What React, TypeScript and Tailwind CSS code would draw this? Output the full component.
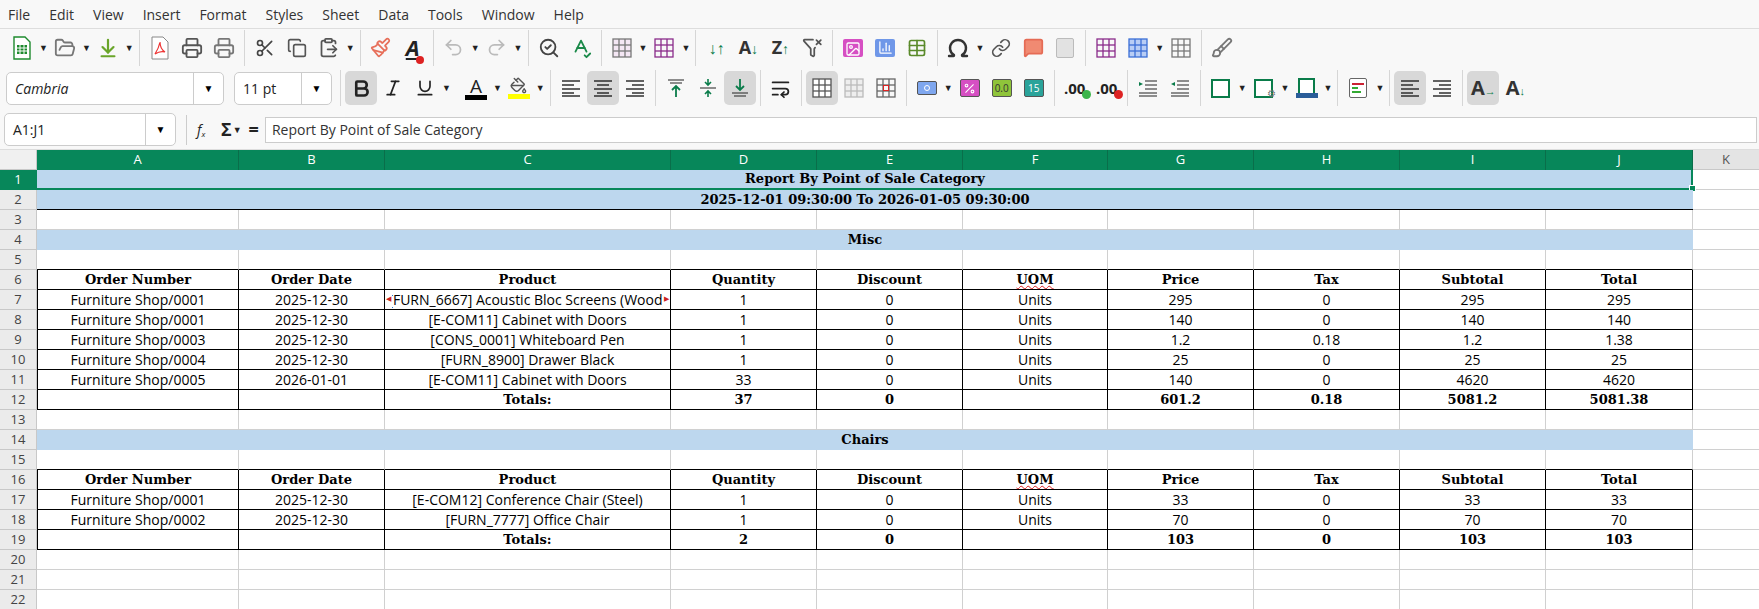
import React from "react";
import {
  FolderOpen, ArrowDownToLine, Printer, Scissors, Copy, ClipboardPaste, Undo2, Redo2,
  SpellCheck, Omega, Link, MessageSquare, Paintbrush, Bold, Italic, Underline,
  PaintBucket, WrapText, Percent, SearchCheck, FilterX, Image, ChartColumn, Table, Brush
} from "lucide-react";

const UI = { fontFamily: '"Open Sans", "Noto Sans", sans-serif' };
const SERIF = { fontFamily: '"DejaVu Serif", "Liberation Serif", serif' };

const Dd = () => <span className="text-[#222] text-[9px] mx-[1px]">▼</span>;
const Sep = () => <div className="w-px h-[36px] bg-[#d6d6d6] mx-[4px]" />;
const Btn = ({ children, active }: { children: React.ReactNode; active?: boolean }) => (
  <div className={`w-[32px] h-[34px] flex items-center justify-center rounded-[5px] ${active ? "bg-[#d8d8d8]" : ""}`}>{children}</div>
);
const Lines = ({ kind }: { kind: "l" | "c" | "r" }) => (
  <svg width="20" height="18" viewBox="0 0 20 18" stroke="#222" strokeWidth="1.4">
    {[2, 6, 10, 14, 17].map((y, i) => {
      const w = i % 2 ? 12 : 18;
      const x = kind === "l" ? 1 : kind === "r" ? 19 - w : (20 - w) / 2;
      return <line key={y} x1={x} x2={x + w} y1={y} y2={y} />;
    })}
  </svg>
);
const Grid = ({ color = "#666", fill = "none", s = 22 }: { color?: string; fill?: string; s?: number }) => (
  <svg width={s} height={s} viewBox="0 0 22 22" stroke={color} strokeWidth="1.3" fill="none">
    <rect x="2" y="2" width="18" height="18" fill={fill} />
    <line x1="2" x2="20" y1="8" y2="8" /><line x1="2" x2="20" y1="14" y2="14" />
    <line x1="8" x2="8" y1="2" y2="20" /><line x1="14" x2="14" y1="2" y2="20" />
  </svg>
);

function Toolbar1() {
  return (
    <div className="h-[37px] flex items-center pl-[6px]">
      <Btn><svg width="20" height="24" viewBox="0 0 20 24"><path d="M2 1h11l5 5v17H2z" fill="#fff" stroke="#1e8a2e" strokeWidth="1.4" /><rect x="5" y="9" width="10" height="9" fill="#1e8a2e" /><path d="M5 12h10M5 15h10M8 9v9M12 9v9" stroke="#fff" /></svg></Btn><Dd />
      <Btn><FolderOpen size={22} color="#777" /></Btn><Dd />
      <Btn><ArrowDownToLine size={22} color="#6aa52a" strokeWidth={2.4} /></Btn><Dd />
      <Sep />
      <Btn><svg width="18" height="24" viewBox="0 0 18 24"><path d="M1 1h11l5 5v17H1z" fill="#fff" stroke="#888" /><path d="M9 6c-1 5-3 9-5 12 3-2 7-3 10-2-3-2-5-6-5-10z" fill="none" stroke="#e33" strokeWidth="1.2" /></svg></Btn>
      <Btn><Printer size={22} color="#555" /></Btn>
      <Btn><Printer size={22} color="#777" /></Btn>
      <Sep />
      <Btn><Scissors size={20} color="#444" /></Btn>
      <Btn><Copy size={20} color="#555" /></Btn>
      <Btn><ClipboardPaste size={21} color="#555" /></Btn><Dd />
      <Sep />
      <Btn><Paintbrush size={21} color="#e76f5a" /></Btn>
      <Btn><span className="text-[22px] font-bold italic underline text-[#222] relative" style={UI}>A<span className="absolute -right-1 bottom-0 w-2 h-2 rounded-full bg-[#d22]" /></span></Btn>
      <Sep />
      <Btn><Undo2 size={21} color="#bbb" /></Btn><Dd />
      <Btn><Redo2 size={21} color="#bbb" /></Btn><Dd />
      <Sep />
      <Btn><SearchCheck size={22} color="#444" /></Btn>
      <Btn><SpellCheck size={22} color="#1b8a4a" /></Btn>
      <Sep />
      <Btn><Grid color="#777" fill="#f4e7f4" /></Btn><Dd />
      <Btn><Grid color="#8a2b8a" /></Btn><Dd />
      <Sep />
      <Btn><span className="text-[#0a7c4a] text-[16px] font-bold">↓↑</span></Btn>
      <Btn><span className="text-[18px] font-bold text-[#333]" style={UI}>A<span className="text-[#0a7c4a] text-[14px]">↓</span></span></Btn>
      <Btn><span className="text-[18px] font-bold text-[#333]" style={UI}>Z<span className="text-[#0a7c4a] text-[14px]">↑</span></span></Btn>
      <Btn><FilterX size={21} color="#555" /></Btn>
      <Sep />
      <Btn><div className="w-[20px] h-[18px] bg-[#d64fc3] rounded-[2px] flex items-end justify-center"><Image size={16} color="#fff" /></div></Btn>
      <Btn><div className="w-[20px] h-[18px] bg-[#6f97e8] rounded-[2px] flex items-center justify-center"><ChartColumn size={15} color="#fff" /></div></Btn>
      <Btn><Table size={20} color="#5a8a2a" /></Btn>
      <Sep />
      <Btn><Omega size={24} color="#333" strokeWidth={2.4} /></Btn><Dd />
      <Btn><Link size={20} color="#555" /></Btn>
      <Btn><MessageSquare size={21} color="#e56b55" fill="#f08a72" /></Btn>
      <Btn><div className="w-[18px] h-[20px] bg-[#e2e2e2] border border-[#bbb] rounded-[2px]" /></Btn>
      <Sep />
      <Btn><Grid color="#8a2b8a" /></Btn>
      <Btn><Grid color="#3b6fd6" fill="#b8cdf5" /></Btn><Dd />
      <Btn><Grid color="#777" /></Btn>
      <Sep />
      <Btn><Brush size={22} color="#777" /></Btn>
    </div>
  );
}

function Toolbar2() {
  const tf = (t: string, bg: string) => (
    <div className={`w-[20px] h-[18px] ${bg} border border-[#555] rounded-[2px] text-[10px] flex items-center justify-center text-white`} style={UI}>{t}</div>
  );
  return (
    <div className="h-[44px] flex items-center pl-[6px]">
      <div className="w-[218px] h-[33px] bg-white border border-[#ccc] rounded-[5px] flex items-center justify-between" style={UI}>
        <span className="italic text-[14px] text-[#222] pl-[8px]">Cambria</span>
        <div className="w-[30px] h-full border-l border-[#ccc] flex items-center justify-center text-[10px]">▼</div>
      </div>
      <div className="ml-[10px] w-[98px] h-[33px] bg-white border border-[#ccc] rounded-[5px] flex items-center justify-between" style={UI}>
        <span className="text-[14px] text-[#222] pl-[8px]">11 pt</span>
        <div className="w-[30px] h-full border-l border-[#ccc] flex items-center justify-center text-[10px]">▼</div>
      </div>
      <div className="w-[4px]" /><Sep />
      <Btn active><Bold size={21} color="#222" strokeWidth={3} /></Btn>
      <Btn><Italic size={20} color="#222" /></Btn>
      <Btn><Underline size={20} color="#222" /></Btn><Dd />
      <div className="w-2" />
      <Btn><div className="flex flex-col items-center"><span className="text-[19px] leading-[18px] text-[#222]" style={UI}>A</span><div className="w-[22px] h-[5px] bg-black" /></div></Btn><Dd />
      <Btn><div className="flex flex-col items-center"><PaintBucket size={17} color="#555" /><div className="w-[22px] h-[5px] bg-[#ffff00]" /></div></Btn><Dd />
      <Sep />
      <Btn><Lines kind="l" /></Btn>
      <Btn active><Lines kind="c" /></Btn>
      <Btn><Lines kind="r" /></Btn>
      <Sep />
      <Btn><svg width="20" height="22" stroke="#222"><line x1="2" x2="18" y1="3" y2="3" /><line x1="4" x2="16" y1="6" y2="6" /><path d="M10 20V9M6 13l4-4 4 4" stroke="#0a7c4a" strokeWidth="1.8" fill="none" /></svg></Btn>
      <Btn><svg width="20" height="22" stroke="#222"><line x1="2" x2="18" y1="11" y2="11" /><path d="M10 2v6M7 5l3 3 3-3M10 20v-6M7 17l3-3 3 3" stroke="#0a7c4a" strokeWidth="1.6" fill="none" /></svg></Btn>
      <Btn active><svg width="20" height="22" stroke="#222"><line x1="2" x2="18" y1="16" y2="16" /><line x1="4" x2="16" y1="19" y2="19" /><path d="M10 2v11M6 9l4 4 4-4" stroke="#0a7c4a" strokeWidth="1.8" fill="none" /></svg></Btn>
      <Sep />
      <Btn><WrapText size={21} color="#222" /></Btn>
      <Sep />
      <Btn active><Grid color="#555" fill="#fff" /></Btn>
      <Btn><Grid color="#bbb" fill="#eee" /></Btn>
      <Btn><div className="relative"><Grid color="#666" /><div className="absolute left-[8px] top-[8px] w-[6px] h-[6px] border border-[#d22]" /></div></Btn>
      <Sep />
      <Btn><div className="w-[20px] h-[14px] bg-[#7fa7ef] border border-[#555] rounded-[2px] flex items-center justify-center"><div className="w-[6px] h-[6px] rounded-full border border-white" /></div></Btn><Dd />
      <Btn><div className="w-[20px] h-[18px] bg-[#d64fc3] border border-[#555] rounded-[2px] flex items-center justify-center"><Percent size={13} color="#fff" /></div></Btn>
      <Btn>{tf("0.0", "bg-[#8fc43a] !text-[#333]")}</Btn>
      <Btn>{tf("15", "bg-[#2aa39a]")}</Btn>
      <Sep />
      <Btn><span className="text-[15px] font-bold text-[#222] relative" style={UI}>.00<span className="absolute -right-[6px] bottom-0 w-[9px] h-[9px] rounded-full bg-[#3bb54a]" /></span></Btn>
      <Btn><span className="text-[15px] font-bold text-[#222] relative" style={UI}>.00<span className="absolute -right-[6px] bottom-0 w-[9px] h-[9px] rounded-full bg-[#d22]" /></span></Btn>
      <Sep />
      <Btn><svg width="20" height="18" stroke="#222"><path d="M1 3l4 2-4 2z" fill="#0a7c4a" stroke="none" /><line x1="7" x2="19" y1="2" y2="2" /><line x1="7" x2="19" y1="6" y2="6" /><line x1="7" x2="19" y1="10" y2="10" /><line x1="1" x2="19" y1="14" y2="14" /><line x1="1" x2="19" y1="17" y2="17" /></svg></Btn>
      <Btn><svg width="20" height="18" stroke="#222"><path d="M5 3l-4 2 4 2z" fill="#0a7c4a" stroke="none" /><line x1="7" x2="19" y1="2" y2="2" /><line x1="7" x2="19" y1="6" y2="6" /><line x1="7" x2="19" y1="10" y2="10" /><line x1="1" x2="19" y1="14" y2="14" /><line x1="1" x2="19" y1="17" y2="17" /></svg></Btn>
      <Sep />
      <Btn><div className="w-[19px] h-[19px] border-2 border-[#0a7c4a] bg-white" /></Btn><Dd />
      <Btn><div className="relative w-[19px] h-[19px] border-2 border-[#0a7c4a] bg-white"><span className="absolute -right-[5px] -bottom-[5px] text-[10px] text-[#777]">⚙</span></div></Btn><Dd />
      <Btn><div className="flex flex-col items-center"><div className="w-[17px] h-[15px] border-2 border-[#0a7c4a] border-b-0 bg-white" /><div className="w-[22px] h-[5px] bg-[#2a5d99]" /></div></Btn><Dd />
      <Sep />
      <Btn><div className="w-[18px] h-[20px] border border-[#666] rounded-[2px] bg-white flex flex-col justify-center gap-[2px] px-[2px]"><div className="h-[2px] w-[12px] bg-[#c23]" /><div className="h-[2px] w-[6px] bg-[#3a3]" /><div className="h-[2px] w-[9px] bg-[#3a3]" /></div></Btn><Dd />
      <Sep />
      <Btn active><Lines kind="l" /></Btn>
      <Btn><Lines kind="r" /></Btn>
      <Sep />
      <Btn active><span className="text-[20px] font-bold text-[#333]" style={UI}>A<span className="text-[#0a7c4a] text-[11px]">→</span></span></Btn>
      <Btn><span className="text-[20px] font-bold text-[#333]" style={UI}>A<span className="text-[#0a7c4a] text-[11px]">↓</span></span></Btn>
    </div>
  );
}

const COLS = [202, 146, 286, 146, 146, 145, 146, 146, 146, 147];
const LETTERS = ["A", "B", "C", "D", "E", "F", "G", "H", "I", "J"];
const HEAD = ["Order Number", "Order Date", "Product", "Quantity", "Discount", "UOM", "Price", "Tax", "Subtotal", "Total"];

type Row = { kind: "title" | "empty" | "head" | "data" | "total"; text?: string; cells?: string[] };
const rows: Row[] = [
  { kind: "title", text: "Report By Point of Sale Category" },
  { kind: "title", text: "2025-12-01 09:30:00 To 2026-01-05 09:30:00" },
  { kind: "empty" },
  { kind: "title", text: "Misc" },
  { kind: "empty" },
  { kind: "head", cells: HEAD },
  { kind: "data", cells: ["Furniture Shop/0001", "2025-12-30", "[FURN_6667] Acoustic Bloc Screens (Wood)", "1", "0", "Units", "295", "0", "295", "295"] },
  { kind: "data", cells: ["Furniture Shop/0001", "2025-12-30", "[E-COM11] Cabinet with Doors", "1", "0", "Units", "140", "0", "140", "140"] },
  { kind: "data", cells: ["Furniture Shop/0003", "2025-12-30", "[CONS_0001] Whiteboard Pen", "1", "0", "Units", "1.2", "0.18", "1.2", "1.38"] },
  { kind: "data", cells: ["Furniture Shop/0004", "2025-12-30", "[FURN_8900] Drawer Black", "1", "0", "Units", "25", "0", "25", "25"] },
  { kind: "data", cells: ["Furniture Shop/0005", "2026-01-01", "[E-COM11] Cabinet with Doors", "33", "0", "Units", "140", "0", "4620", "4620"] },
  { kind: "total", cells: ["", "", "Totals:", "37", "0", "", "601.2", "0.18", "5081.2", "5081.38"] },
  { kind: "empty" },
  { kind: "title", text: "Chairs" },
  { kind: "empty" },
  { kind: "head", cells: HEAD },
  { kind: "data", cells: ["Furniture Shop/0001", "2025-12-30", "[E-COM12] Conference Chair (Steel)", "1", "0", "Units", "33", "0", "33", "33"] },
  { kind: "data", cells: ["Furniture Shop/0002", "2025-12-30", "[FURN_7777] Office Chair", "1", "0", "Units", "70", "0", "70", "70"] },
  { kind: "total", cells: ["", "", "Totals:", "2", "0", "", "103", "0", "103", "103"] },
  { kind: "empty" },
  { kind: "empty" },
  { kind: "empty" },
];

function Sheet() {
  return (
    <div className="bg-white">
      <div className="flex h-[20px]" style={UI}>
        <div className="w-[37px] shrink-0 bg-[#f0f0f0] border-r border-b border-[#c8c8c8]" />
        {COLS.map((w, i) => (
          <div key={i} style={{ width: w }} className="shrink-0 bg-[#07875a] text-white text-[13px] flex items-center justify-center border-r border-[#0a6e4a]">{LETTERS[i]}</div>
        ))}
        <div className="flex-1 bg-[#e4e4e4] text-[#555] text-[13px] flex items-center justify-center border-b border-[#c8c8c8]">K</div>
      </div>
      {rows.map((r, ri) => {
        const n = ri + 1;
        const tableRow = r.kind === "head" || r.kind === "data" || r.kind === "total";
        const nextTable = rows[ri + 1] && rows[ri + 1].kind === "head";
        const bottomBlack = tableRow || nextTable || n === 2;
        return (
          <div key={ri} className="flex h-[20px]">
            <div className={`w-[37px] shrink-0 text-[13px] flex items-center justify-center border-r border-b ${n === 1 ? "bg-[#07875a] text-white border-[#07875a]" : "bg-[#ebebeb] text-[#444] border-[#c8c8c8]"}`} style={UI}>{n}</div>
            {r.kind === "title" ? (
              <div style={{ width: 1656 }} className={`shrink-0 bg-[#bdd7ee] text-[13px] font-bold text-black flex items-center justify-center relative ${n === 1 ? "border-b-2 border-[#07875a]" : bottomBlack ? "border-b border-black" : ""}`}>
                <span style={SERIF}>{r.text}</span>
                {n === 1 && <><div className="absolute right-0 top-0 bottom-0 w-[2px] bg-[#07875a]" /><div className="absolute -right-[3px] -bottom-[4px] w-[7px] h-[7px] bg-[#07875a] border border-white" /></>}
              </div>
            ) : (
              COLS.map((w, ci) => {
                const v = r.cells ? r.cells[ci] : "";
                const bold = r.kind === "head" || r.kind === "total";
                const trunc = n === 7 && ci === 2;
                return (
                  <div key={ci} style={{ width: w }}
                    className={`shrink-0 box-border border-r border-b ${tableRow ? "border-r-black" : "border-r-[#d0d0d0]"} ${bottomBlack ? "border-b-black" : "border-b-[#d0d0d0]"} ${tableRow && ci === 0 ? "border-l border-l-black" : ""} flex items-center justify-center overflow-hidden whitespace-nowrap relative text-black ${bold ? "text-[13px] font-bold" : "text-[14px]"}`}
                  >
                    <span style={bold ? SERIF : UI} className={r.kind === "head" && ci === 5 ? "underline decoration-wavy decoration-[#d22] decoration-1" : ""}>{v}</span>
                    {trunc && <>
                      <span className="absolute left-0 top-0 bottom-0 w-[7px] bg-white flex items-center justify-center text-[#c22] text-[7px]">◀</span>
                      <span className="absolute right-0 top-0 bottom-0 w-[7px] bg-white flex items-center justify-center text-[#c22] text-[7px]">▶</span>
                    </>}
                  </div>
                );
              })
            )}
            <div className="flex-1 border-b border-[#d0d0d0]" />
          </div>
        );
      })}
    </div>
  );
}

export default function App() {
  return (
    <div className="w-[1759px] h-[609px] overflow-hidden bg-[#f8f8f8]" style={UI}>
      <div className="h-[29px] flex items-center gap-[19px] pl-[8px] text-[14px] text-[#333] border-b border-[#ddd]">
        {["File", "Edit", "View", "Insert", "Format", "Styles", "Sheet", "Data", "Tools", "Window", "Help"].map(m => <span key={m}>{m}</span>)}
      </div>
      <Toolbar1 />
      <Toolbar2 />
      <div className="h-[40px] flex items-center pl-[4px] border-b border-[#ddd]">
        <div className="w-[172px] h-[33px] bg-white border border-[#ccc] rounded-[5px] flex items-center justify-between">
          <span className="text-[14px] text-[#222] pl-[8px]">A1:J1</span>
          <div className="w-[30px] h-full border-l border-[#ccc] flex items-center justify-center text-[10px]">▼</div>
        </div>
        <div className="w-px h-[30px] bg-[#ccc] mx-[10px]" />
        <span className="text-[14px] text-[#222] italic w-[20px]">f<sub className="text-[8px]">x</sub></span>
        <span className="text-[18px] font-bold text-[#222] ml-[4px]">Σ</span><Dd />
        <span className="text-[18px] font-bold text-[#222] mx-[6px]">=</span>
        <div className="flex-1 h-[26px] bg-white border border-[#ccc] flex items-center pl-[6px] text-[14px] text-[#333] mr-[2px]">Report By Point of Sale Category</div>
      </div>
      <Sheet />
    </div>
  );
}
